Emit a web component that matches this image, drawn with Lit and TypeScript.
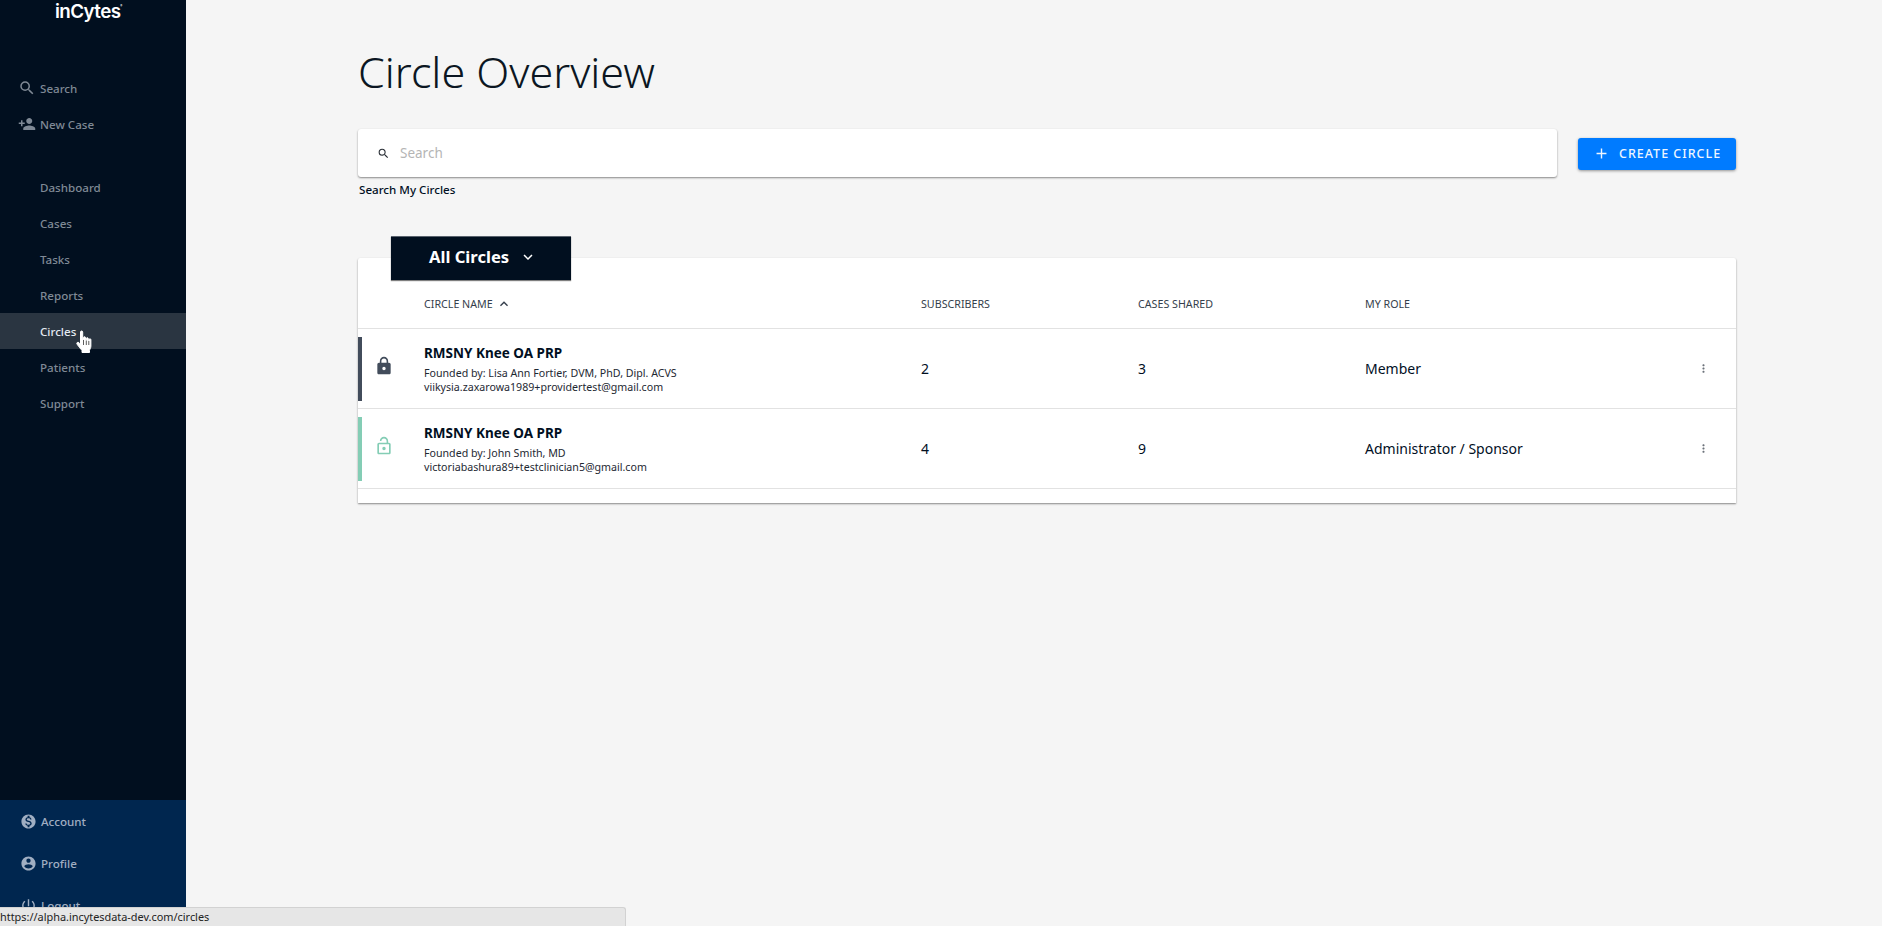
import { LitElement, html, css, svg } from "lit";
import { customElement } from "lit/decorators.js";

const ICONS: Record<string, string> = {
  search: "M15.5 14h-.79l-.28-.27A6.471 6.471 0 0 0 16 9.5 6.5 6.5 0 1 0 9.5 16c1.61 0 3.09-.59 4.23-1.57l.27.28v.79l5 4.99L20.49 19l-4.99-5zm-6 0C7.01 14 5 11.99 5 9.5S7.01 5 9.5 5 14 7.01 14 9.5 11.99 14 9.5 14z",
  personAdd: "M15 12c2.21 0 4-1.79 4-4s-1.79-4-4-4-4 1.79-4 4 1.79 4 4 4zm-9-2V7H4v3H1v2h3v3h2v-3h3v-2H6zm9 4c-2.67 0-8 1.34-8 4v2h16v-2c0-2.66-5.33-4-8-4z",
  lock: "M18 8h-1V6c0-2.76-2.24-5-5-5S7 3.24 7 6v2H6c-1.1 0-2 .9-2 2v10c0 1.1.9 2 2 2h12c1.1 0 2-.9 2-2V10c0-1.1-.9-2-2-2zm-6 9c-1.1 0-2-.9-2-2s.9-2 2-2 2 .9 2 2-.9 2-2 2zm3.1-9H8.9V6c0-1.71 1.39-3.1 3.1-3.1 1.71 0 3.1 1.39 3.1 3.1v2z",
  lockOpen: "M12 17c1.1 0 2-.9 2-2s-.9-2-2-2-2 .9-2 2 .9 2 2 2zm6-9h-1V6c0-2.76-2.24-5-5-5S7 3.24 7 6h1.9c0-1.71 1.39-3.1 3.1-3.1 1.71 0 3.1 1.39 3.1 3.1v2H6c-1.1 0-2 .9-2 2v10c0 1.1.9 2 2 2h12c1.1 0 2-.9 2-2V10c0-1.1-.9-2-2-2zm0 12H6V10h12v10z",
  more: "M12 8c1.1 0 2-.9 2-2s-.9-2-2-2-2 .9-2 2 .9 2 2 2zm0 2c-1.1 0-2 .9-2 2s.9 2 2 2 2-.9 2-2-.9-2-2-2zm0 6c-1.1 0-2 .9-2 2s.9 2 2 2 2-.9 2-2-.9-2-2-2z",
  money: "M12 2C6.48 2 2 6.48 2 12s4.48 10 10 10 10-4.48 10-10S17.52 2 12 2zm1.41 16.09V20h-2.67v-1.93c-1.71-.36-3.16-1.46-3.27-3.4h1.96c.1 1.05.82 1.87 2.65 1.87 1.96 0 2.4-.98 2.4-1.59 0-.83-.44-1.61-2.67-2.14-2.48-.6-4.18-1.62-4.18-3.67 0-1.72 1.39-2.84 3.11-3.21V4h2.67v1.95c1.86.45 2.79 1.86 2.85 3.39H14.3c-.05-1.11-.64-1.87-2.22-1.87-1.5 0-2.4.68-2.4 1.64 0 .84.65 1.39 2.67 1.91s4.18 1.39 4.18 3.91c-.01 1.83-1.38 2.84-3.12 3.16z",
  account: "M12 2C6.48 2 2 6.48 2 12s4.48 10 10 10 10-4.48 10-10S17.52 2 12 2zm0 3c1.66 0 3 1.34 3 3s-1.34 3-3 3-3-1.34-3-3 1.34-3 3-3zm0 14.2c-2.5 0-4.71-1.28-6-3.22.03-1.99 4-3.08 6-3.08 1.99 0 5.97 1.09 6 3.08-1.29 1.94-3.5 3.22-6 3.22z",
  power: "M13 3h-2v10h2V3zm4.83 2.17l-1.42 1.42C17.99 7.86 19 9.81 19 12c0 3.87-3.13 7-7 7s-7-3.13-7-7c0-2.19 1.01-4.14 2.58-5.42L6.17 5.17C4.23 6.82 3 9.26 3 12c0 4.97 4.03 9 9 9s9-4.03 9-9c0-2.74-1.23-5.18-3.17-6.83z",
  plus: "M19 13h-6v6h-2v-6H5v-2h6V5h2v6h6v2z",
  chevronDown: "M7.41 8.59 12 13.17l4.59-4.58L18 10l-6 6-6-6z",
  chevronUp: "M7.41 15.41 12 10.83l4.59 4.58L18 14l-6-6-6 6z",
};

const icon = (name: string, size: number) => html`<svg width=${size} height=${size} viewBox="0 0 24 24" fill="currentColor">${svg`<path d=${ICONS[name]}></path>`}</svg>`;

const MENU = ["Dashboard", "Cases", "Tasks", "Reports", "Circles", "Patients", "Support"];

const CIRCLES = [
  { name: "RMSNY Knee OA PRP", founder: "Founded by: Lisa Ann Fortier, DVM, PhD, Dipl. ACVS", email: "viikysia.zaxarowa1989+providertest@gmail.com", subs: 2, cases: 3, role: "Member", owner: false },
  { name: "RMSNY Knee OA PRP", founder: "Founded by: John Smith, MD", email: "victoriabashura89+testclinician5@gmail.com", subs: 4, cases: 9, role: "Administrator / Sponsor", owner: true },
];

@customElement("app-root")
class AppRoot extends LitElement {
  static styles = css`
    :host {
      display: flex;
      height: 926px;
      overflow: hidden;
      position: relative;
      background: #f5f5f5;
      font-family: "Noto Sans", "Open Sans", sans-serif;
      color: #010f1f;
    }
    svg {
      display: block;
      flex: none;
    }
    .sidebar {
      width: 186px;
      flex: none;
      background: #010f1f;
      display: flex;
      flex-direction: column;
      color: #7f8995;
      font-size: 11.6px;
      font-weight: 500;
    }
    .logo {
      height: 70px;
      padding-left: 55px;
      color: #fff;
      font-family: Inter, sans-serif;
      font-size: 18.8px;
      font-weight: 600;
      letter-spacing: -0.6px;
      line-height: 24px;
      box-sizing: border-box;
    }
    .logo sup {
      font-size: 3px;
      vertical-align: 11px;
      line-height: 0;
    }
    .group {
      margin-bottom: 27px;
    }
    .item {
      height: 36px;
      display: flex;
      align-items: center;
      padding-left: 40px;
    }
    .item.icon {
      padding-left: 18px;
      gap: 4px;
    }
    .item.hover {
      background: #2a3541;
      color: #e4ebf2;
    }
    .foot {
      margin-top: auto;
      height: 126px;
      background: #00264f;
      color: #a0aec2;
    }
    .foot .item {
      height: 42px;
      padding-left: 20px;
      gap: 4px;
    }
    .main {
      flex: 1;
      min-width: 0;
      padding: 0 146px 0 172px;
    }
    h1 {
      margin: 0;
      padding: 43px 0 0 0;
      height: 129px;
      box-sizing: border-box;
      font-size: 43px;
      font-weight: 300;
      line-height: 58px;
      color: #0b1622;
    }
    .search-row {
      display: flex;
      align-items: center;
      gap: 21px;
    }
    .search {
      flex: 1;
      height: 48px;
      background: #fff;
      border-radius: 3px;
      box-shadow: 0 1px 2px rgba(0, 0, 0, 0.45);
      display: flex;
      align-items: center;
      gap: 10px;
      padding-left: 19px;
      color: #2a2f36;
      box-sizing: border-box;
    }
    .search span {
      color: #b5b5b5;
      font-size: 13.5px;
    }
    .create {
      width: 158px;
      height: 32px;
      margin-top: 1px;
      background: #007bff;
      border-radius: 3px;
      color: #eef6ff;
      display: flex;
      align-items: center;
      gap: 9px;
      padding-left: 15px;
      box-sizing: border-box;
      font-size: 12.5px;
      font-weight: 500;
      letter-spacing: 1px;
      box-shadow: 0 1px 3px rgba(0, 0, 0, 0.4);
    }
    .hint {
      margin: 5px 0 0 1px;
      font-size: 11.6px;
      font-weight: 500;
      line-height: 16px;
    }
    .tab {
      position: relative;
      z-index: 1;
      width: 180px;
      height: 44px;
      margin: 38px 0 -22px 33px;
      background: #010f1f;
      box-shadow: 0 1px 1px rgba(0, 0, 0, 0.5);
      border-top: 1px solid #59626d;
      box-sizing: border-box;
      color: #fff;
      font-size: 16.6px;
      font-weight: 700;
      display: flex;
      align-items: center;
      gap: 10px;
      padding: 0 0 4px 38px;
    }
    .card {
      background: #fff;
      border-radius: 2px 2px 0 0;
      box-shadow: 0 1px 2px rgba(0, 0, 0, 0.45);
      padding-bottom: 14px;
    }
    .row {
      display: grid;
      grid-template-columns: 66px 497px 217px 227px 1fr 39px;
      align-items: center;
      border-bottom: 1px solid #e2e2e2;
      height: 80px;
      box-sizing: border-box;
      font-size: 14px;
    }
    .row.head {
      height: 71px;
      padding-top: 22px;
      font-size: 10.7px;
      color: #343e4b;
      text-transform: uppercase;
    }
    .sort {
      display: flex;
      align-items: center;
      gap: 3px;
      color: #343e4b;
    }
    .mark {
      height: 100%;
      display: flex;
      align-items: center;
      gap: 12px;
    }
    .bar {
      width: 4px;
      height: 64px;
      background: #424c5b;
    }
    .owner .bar {
      background: #84cdb5;
    }
    .lock {
      color: #424c5b;
      margin-top: -6px;
    }
    .owner .lock {
      color: #84cdb5;
    }
    .title {
      font-size: 13.5px;
      font-weight: 700;
      line-height: 20px;
    }
    .sub {
      font-size: 10.65px;
      line-height: 14px;
      color: #1e2832;
    }
    .title + .sub {
      margin-top: 3px;
    }
    .dots {
      color: #6c727a;
    }
    .status {
      position: absolute;
      left: 0;
      bottom: 0;
      width: 626px;
      height: 19px;
      background: #e6e6e6;
      border-top: 1px solid #d2d2d2;
      border-right: 1px solid #d2d2d2;
      border-radius: 0 3px 0 0;
      box-sizing: border-box;
      font-size: 10.9px;
      line-height: 18px;
      color: #222;
      white-space: nowrap;
    }
    .hand {
      position: absolute;
      left: 75px;
      top: 330px;
    }
  `;

  render() {
    return html`
      <aside class="sidebar">
        <div class="logo">inCytes<sup>®</sup></div>
        <div class="group">
          <div class="item icon">${icon("search", 18)}Search</div>
          <div class="item icon">${icon("personAdd", 18)}New Case</div>
        </div>
        <div class="group">
          ${MENU.map((m) => html`<div class="item ${m === "Circles" ? "hover" : ""}">${m}</div>`)}
        </div>
        <div class="foot">
          <div class="item">${icon("money", 17)}Account</div>
          <div class="item">${icon("account", 17)}Profile</div>
          <div class="item">${icon("power", 17)}Logout</div>
        </div>
      </aside>
      <main class="main">
        <h1>Circle Overview</h1>
        <div class="search-row">
          <div class="search">${icon("search", 13)}<span>Search</span></div>
          <div class="create">${icon("plus", 17)}CREATE CIRCLE</div>
        </div>
        <div class="hint">Search My Circles</div>
        <div class="tab">All Circles ${icon("chevronDown", 18)}</div>
        <div class="card">
          <div class="row head">
            <span></span>
            <span class="sort">Circle Name ${icon("chevronUp", 16)}</span>
            <span>Subscribers</span>
            <span>Cases Shared</span>
            <span>My Role</span>
            <span></span>
          </div>
          ${CIRCLES.map(
            (c) => html`
              <div class="row ${c.owner ? "owner" : ""}">
                <div class="mark">
                  <div class="bar"></div>
                  <div class="lock">${icon(c.owner ? "lockOpen" : "lock", 20)}</div>
                </div>
                <div>
                  <div class="title">${c.name}</div>
                  <div class="sub">${c.founder}</div>
                  <div class="sub">${c.email}</div>
                </div>
                <span>${c.subs}</span>
                <span>${c.cases}</span>
                <span>${c.role}</span>
                <span class="dots">${icon("more", 13)}</span>
              </div>
            `
          )}
        </div>
      </main>
      <svg class="hand" width="18" height="24" viewBox="0 0 17 24">
        <path d="M5 2c0-1.4 2.2-1.4 2.2 0v7l.8.2V7.6c0-1.2 2-1.2 2 0v2l.8.2V8.6c0-1.2 2-1.2 2 0v1.6l.7.2v-.7c0-1.2 1.9-1.2 1.9 0V16c0 2-1 3.2-1.4 4.4v2.1H6.5v-2c-1.3-1.6-3-3.4-5-6.4-.8-1.2.8-2.6 2-1.4L5 14.2z" fill="#fff" stroke="#fff" stroke-width="1" stroke-linejoin="round"></path>
        <path d="M8 10v5M10.8 10.5V15M13.3 11v4" fill="none" stroke="#333" stroke-width="0.8"></path>
      </svg>
      <div class="status">https://alpha.incytesdata-dev.com/circles</div>
    `;
  }
}
